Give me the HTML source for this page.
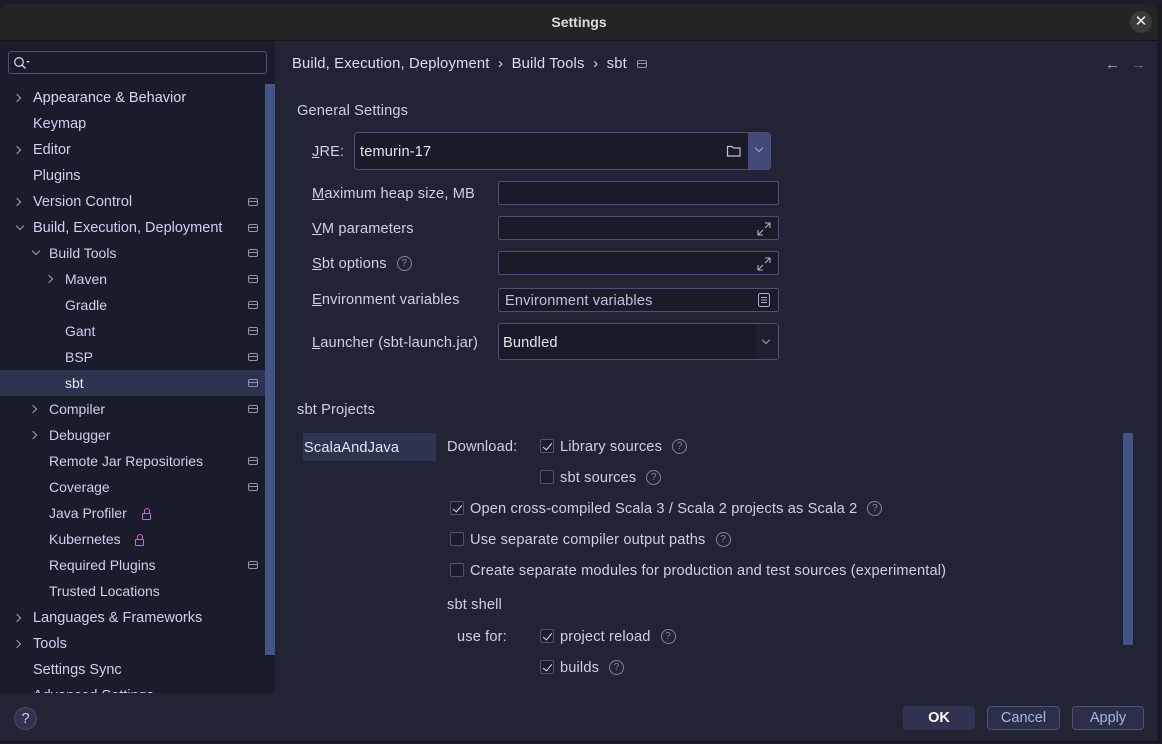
<!DOCTYPE html>
<html><head><meta charset="utf-8"><style>
*{margin:0;padding:0;box-sizing:border-box}
body{width:1162px;height:744px;background:#1a1b29;font-family:"Liberation Sans",sans-serif;font-size:14px;color:#c9d2ec;position:relative;overflow:hidden}
.a{position:absolute;white-space:nowrap}
.m{font-size:14.6px;letter-spacing:0.15px;margin-top:1px}
#dlg{position:absolute;left:0;top:4px;width:1159px;height:738px;background:#222436;border-radius:10px 10px 0 0;overflow:hidden;border-right:1px solid #111;border-bottom:1px solid #111}
#title{position:absolute;left:0;top:0;width:100%;height:37px;background:#242424;border-bottom:1px solid #151515}
#side{position:absolute;left:0;top:37px;width:275px;height:652px;background:#1b1c2b}
.row{position:absolute;left:0;width:265px;height:26px;line-height:26px}
.row .t{position:absolute}
.chev{position:absolute;width:6px;height:6px;border-right:1.3px solid #9aa3bd;border-bottom:1.3px solid #9aa3bd}
.r{transform:rotate(-45deg)}.d{transform:rotate(45deg)}
.pi{position:absolute;left:248px;top:9px;width:10px;height:8px;border:1.2px solid #8d95ad;border-radius:2px}
.pi:after{content:"";position:absolute;left:0;right:0;top:1.5px;border-top:1.2px solid #8d95ad}
.inp{position:absolute;background:#1a1b29;border:1px solid #4a507a;border-radius:2px}
.cb{position:absolute;width:14px;height:14px;border:1px solid #4e5470;border-radius:2px;background:#1c1d2c}
.cb.on:after{content:"";position:absolute;left:4px;top:1px;width:4px;height:8px;border-right:1.6px solid #d7def5;border-bottom:1.6px solid #d7def5;transform:rotate(40deg)}
.q{display:inline-block;position:relative;top:0px;margin-left:10px;width:15px;height:15px;border:1px solid #80879d;border-radius:50%;font-size:10px;line-height:13px;text-align:center;color:#80879d;letter-spacing:0;vertical-align:top}
.btn{position:absolute;top:706px;height:24px;border-radius:4px;text-align:center;line-height:22px;font-size:14.5px}
u{text-decoration:underline}
.lock{position:absolute;width:9px;height:7px;border:1.3px solid #d35fd6;border-radius:1px}
.lock:before{content:"";position:absolute;left:1px;top:-6px;width:4px;height:5px;border:1.3px solid #d35fd6;border-bottom:none;border-radius:3px 3px 0 0}
</style></head><body>
<div class="a" style="left:0;top:0;width:1162px;height:4px;background:#1c1d2b"></div>
<div id="dlg">
<div id="title"><div class="a" style="left:0;width:100%;text-align:center;top:10px;font-weight:bold;color:#dcdcdc;font-size:14px">Settings</div>
<div class="a" style="left:1130px;top:7px;width:22px;height:22px;border-radius:50%;background:#3a3a3a;color:#eee;text-align:center;line-height:21px;font-size:15px">✕</div></div>
</div>
<div id="side" style="top:41px">
<div class="a" style="left:8px;top:10px;width:259px;height:23px;border:1px solid #4a507a;border-radius:3px;background:#1b1c2b"></div>
<svg class="a" style="left:13px;top:15px" width="18" height="14"><circle cx="6" cy="6" r="4.3" fill="none" stroke="#c9d2ec" stroke-width="1.3"/><path d="M9 9l3.5 3.5" stroke="#c9d2ec" stroke-width="1.3"/><path d="M13 5h4l-2 2z" fill="#c9d2ec"/></svg>
<div class="a" style="left:265px;top:43px;width:10px;height:571px;background:#435584"></div>
<div class="a" style="left:0;top:329px;width:265px;height:26px;background:#2e3350"></div>
</div>
<div style="position:absolute;left:0;top:85px">
<div class="row" style="top:0"><i class="chev r" style="left:14px;top:10px"></i><span class="t" style="left:33px;font-size:14.5px;color:#d0d9f2">Appearance &amp; Behavior</span></div>
<div class="row" style="top:26px"><span class="t" style="left:33px;font-size:14.5px">Keymap</span></div>
<div class="row" style="top:52px"><i class="chev r" style="left:14px;top:10px"></i><span class="t" style="left:33px;font-size:14.5px">Editor</span></div>
<div class="row" style="top:78px"><span class="t" style="left:33px;font-size:14.5px">Plugins</span></div>
<div class="row" style="top:104px"><i class="chev r" style="left:14px;top:10px"></i><span class="t" style="left:33px;font-size:14.5px">Version Control</span><i class="pi"></i></div>
<div class="row" style="top:130px"><i class="chev d" style="left:17px;top:8px"></i><span class="t" style="left:33px;font-size:14.5px">Build, Execution, Deployment</span><i class="pi"></i></div>
</div>
<div style="position:absolute;left:0;top:84px">
<div class="row" style="top:156px"><i class="chev d" style="left:33px;top:8px"></i><span class="t" style="left:49px">Build Tools</span><i class="pi"></i></div>
<div class="row" style="top:182px"><i class="chev r" style="left:46px;top:10px"></i><span class="t" style="left:65px">Maven</span><i class="pi"></i></div>
<div class="row" style="top:208px"><span class="t" style="left:65px">Gradle</span><i class="pi"></i></div>
<div class="row" style="top:234px"><span class="t" style="left:65px">Gant</span><i class="pi"></i></div>
<div class="row" style="top:260px"><span class="t" style="left:65px">BSP</span><i class="pi"></i></div>
<div class="row" style="top:286px"><span class="t" style="left:65px;color:#e4e9f8">sbt</span><i class="pi"></i></div>
<div class="row" style="top:312px"><i class="chev r" style="left:30px;top:10px"></i><span class="t" style="left:49px">Compiler</span><i class="pi"></i></div>
<div class="row" style="top:338px"><i class="chev r" style="left:30px;top:10px"></i><span class="t" style="left:49px">Debugger</span></div>
<div class="row" style="top:364px"><span class="t" style="left:49px">Remote Jar Repositories</span><i class="pi"></i></div>
<div class="row" style="top:390px"><span class="t" style="left:49px">Coverage</span><i class="pi"></i></div>
<div class="row" style="top:416px"><span class="t" style="left:49px">Java Profiler</span><i class="lock" style="left:142px;top:13px"></i></div>
<div class="row" style="top:442px"><span class="t" style="left:49px">Kubernetes</span><i class="lock" style="left:135px;top:13px"></i></div>
<div class="row" style="top:468px"><span class="t" style="left:49px">Required Plugins</span><i class="pi"></i></div>
<div class="row" style="top:494px"><span class="t" style="left:49px">Trusted Locations</span></div>
</div>
<div style="position:absolute;left:0;top:85px">
<div class="row" style="top:520px"><i class="chev r" style="left:14px;top:10px"></i><span class="t" style="left:33px;font-size:14.5px">Languages &amp; Frameworks</span></div>
<div class="row" style="top:546px"><i class="chev r" style="left:14px;top:10px"></i><span class="t" style="left:33px;font-size:14.5px">Tools</span></div>
<div class="row" style="top:572px"><span class="t" style="left:33px;font-size:14.5px">Settings Sync</span></div>
<div class="row" style="top:598px;height:10px;overflow:hidden"><span class="t" style="left:33px;font-size:14.5px">Advanced Settings</span></div>
</div>
<div class="a" style="left:0;top:693px;width:1158px;height:48px;background:#222436"></div>
<div class="a" style="left:14px;top:707px;width:23px;height:23px;border-radius:50%;background:#2f3350;border:1px solid #454b6c;text-align:center;line-height:21px;color:#c9d2ec;font-size:15px">?</div>
<div class="btn" style="left:903px;width:72px;background:#2f3350;color:#fff;font-weight:bold;line-height:24px">OK</div>
<div class="btn" style="left:987px;width:73px;background:#2b2f4a;border:1px solid #4a507a;color:#a9b6e0">Cancel</div>
<div class="btn" style="left:1072px;width:72px;background:#2b2f4a;border:1px solid #4a507a;color:#a9b6e0">Apply</div>

<div class="a" style="left:292px;top:56px;font-size:14.8px;color:#d8dff3;letter-spacing:0.15px">Build, Execution, Deployment &nbsp;›&nbsp; Build Tools &nbsp;›&nbsp; sbt</div>
<i class="pi" style="left:637px;top:60px"></i>
<div class="a" style="left:1105px;top:56px;font-size:15px;color:#a8b0c6">←</div>
<div class="a" style="left:1131px;top:56px;font-size:15px;color:#5a6078">→</div>

<div class="a m" style="left:297px;top:102px">General Settings</div>
<div class="a m" style="left:312px;top:143px"><u>J</u>RE:</div>
<div class="inp" style="left:354px;top:132px;width:417px;height:38px;border-radius:4px"></div>
<div class="a" style="left:748px;top:133px;width:22px;height:36px;background:#424a78;border-radius:0 3px 3px 0"></div>
<i class="chev d" style="position:absolute;left:756px;top:145px"></i>
<div class="a m" style="left:360px;top:143px;color:#dfe5f5">temurin-17</div>
<svg class="a" style="left:726px;top:144px" width="16" height="14"><path d="M1.5 2.5h4.5l1.5 1.5h6.5v8h-12.5z" fill="none" stroke="#b8c0d6" stroke-width="1.2"/></svg>
<div class="a m" style="left:312px;top:185px"><u>M</u>aximum heap size, MB</div>
<div class="inp" style="left:498px;top:181px;width:281px;height:24px"></div>
<div class="a m" style="left:312px;top:220px"><u>V</u>M parameters</div>
<div class="inp" style="left:498px;top:216px;width:281px;height:24px"></div>
<svg class="a" style="left:756px;top:221px" width="16" height="16"><path d="M9 2h5v5M14 2l-5 5M7 14h-5v-5M2 14l5-5" fill="none" stroke="#aab2c8" stroke-width="1.1"/></svg>
<div class="a m" style="left:312px;top:255px"><u>S</u>bt options<span class="q">?</span></div>
<div class="inp" style="left:498px;top:251px;width:281px;height:24px"></div>
<svg class="a" style="left:756px;top:256px" width="16" height="16"><path d="M9 2h5v5M14 2l-5 5M7 14h-5v-5M2 14l5-5" fill="none" stroke="#aab2c8" stroke-width="1.1"/></svg>
<div class="a m" style="left:312px;top:291px"><u>E</u>nvironment variables</div>
<div class="inp" style="left:498px;top:288px;width:281px;height:24px"></div>
<div class="a m" style="left:505px;top:292px;color:#b9c4e6">Environment variables</div>
<svg class="a" style="left:757px;top:293px" width="14" height="14"><rect x="1.5" y="0.5" width="11" height="13" rx="2" fill="none" stroke="#aab2c8"/><path d="M4 4.5h6M4 7h6M4 9.5h6" stroke="#aab2c8"/></svg>
<div class="a m" style="left:312px;top:334px"><u>L</u>auncher (sbt-launch.jar)</div>
<div class="inp" style="left:498px;top:323px;width:281px;height:37px;border-radius:3px"></div>
<div class="a" style="left:756px;top:324px;width:22px;height:35px;background:#1e1f2f"></div>
<i class="chev d" style="position:absolute;left:763px;top:337px"></i>
<div class="a m" style="left:503px;top:334px;color:#dfe5f5">Bundled</div>

<div class="a m" style="left:297px;top:401px">sbt Projects</div>
<div class="a" style="left:303px;top:433px;width:133px;height:28px;background:#2e3350"></div>
<div class="a m" style="left:304px;top:439px;color:#e4e9f8">ScalaAndJava</div>
<div class="a" style="left:1123px;top:433px;width:10px;height:212px;background:#435584"></div>
<div class="a m" style="left:447px;top:438px">Download:</div>
<div class="cb on" style="left:540px;top:439px"></div><div class="a m" style="left:560px;top:438px">Library sources<span class="q">?</span></div>
<div class="cb" style="left:540px;top:470px"></div><div class="a m" style="left:560px;top:469px">sbt sources<span class="q">?</span></div>
<div class="cb on" style="left:450px;top:501px"></div><div class="a m" style="left:470px;top:500px">Open cross-compiled Scala 3 / Scala 2 projects as Scala 2<span class="q">?</span></div>
<div class="cb" style="left:450px;top:532px"></div><div class="a m" style="left:470px;top:531px">Use separate compiler output paths<span class="q">?</span></div>
<div class="cb" style="left:450px;top:563px"></div><div class="a m" style="left:470px;top:562px">Create separate modules for production and test sources (experimental)</div>
<div class="a m" style="left:447px;top:596px">sbt shell</div>
<div class="a m" style="left:457px;top:628px">use for:</div>
<div class="cb on" style="left:540px;top:629px"></div><div class="a m" style="left:560px;top:628px">project reload<span class="q">?</span></div>
<div class="cb on" style="left:540px;top:660px"></div><div class="a m" style="left:560px;top:659px">builds<span class="q">?</span></div>
</body></html>
